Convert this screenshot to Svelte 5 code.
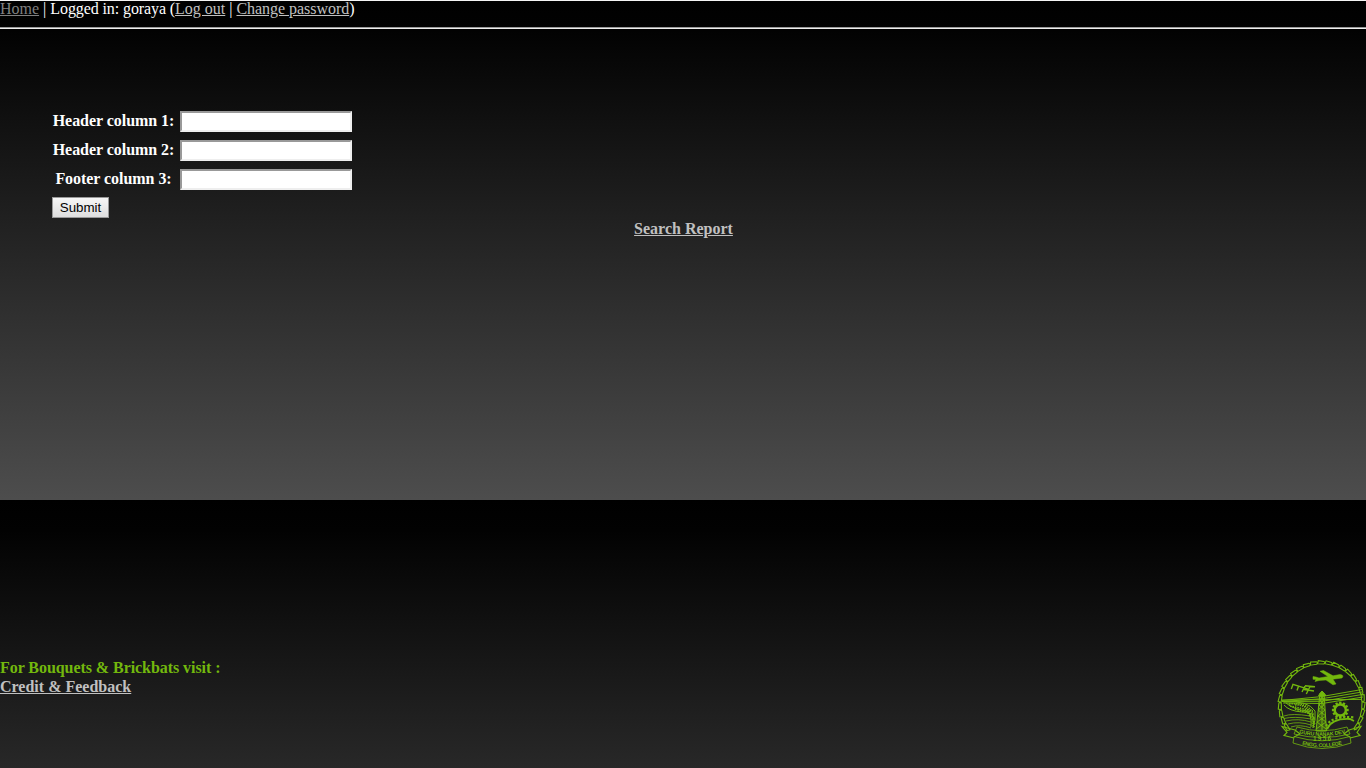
<script>
  const fields = ['Header column 1:', 'Header column 2:', 'Footer column 3:'];
  const count = 25;
  const start = 142;
  const step = (398 - start) / count;
  const at = (deg, r) => {
    const a = (deg * Math.PI) / 180;
    return `${(51.6 + r * Math.cos(a)).toFixed(2)},${(49.2 + r * Math.sin(a)).toFixed(2)}`;
  };
  const links = Array.from({ length: count }, (_, i) => {
    const a = start + i * step;
    return `M${at(a - 0.8, 40.6)} L${at(a + 0.8, 43.6)} L${at(a + step - 2, 42.8)} L${at(a + step, 41.6)} L${at(a + step - 2, 40.3)} Z`;
  });
  const teeth = Array.from({ length: 12 }, (_, i) => i * 30);
</script>

<div class="page">
  <nav>
    <a class="home" href="#home">Home</a> <span class="bar">|</span> <span class="user">Logged in: goraya (</span><a href="#logout">Log out</a> <span class="bar">|</span> <a class="password" href="#password">Change password</a>)
  </nav>
  <div class="rule"></div>
  <main>
    <form onsubmit={(e) => e.preventDefault()}>
      {#each fields as label, i}
        <label for={'f' + i}>{label}</label>
        <input id={'f' + i} type="text" />
      {/each}
      <button>Submit</button>
    </form>
    <a class="report" href="#search">Search Report</a>
  </main>
  <footer>
    <div class="credit">
      <span>For Bouquets &amp; Brickbats visit :</span>
      <a href="#credit">Credit &amp; Feedback</a>
    </div>
    <svg width="96" height="100" viewBox="0 0 96 100" fill="none" stroke="#73b80d" stroke-width="1">
      {#each links as d}
        <path {d} stroke-width="1.1" />
      {/each}
      <!-- aeroplane -->
      <path d="M43 21.5 L46 22 L49 23 L58 21.5 L50 16.3 L53.5 15.5 L63 20.8 L70 19.5 Q74.5 20 72 23 L63 24.2 L66 29 L63 29.8 L56 25 L49 25.5 L45 26.5 L46 24.5 L43 24.3 Z" fill="#73b80d" stroke-width=".5" />
      <!-- birds -->
      <path d="M21.3 34 L23 29.3 L38 34.2 M28.6 31 L27 35.5 M35 31 L32 37 M35 30.8 L45 31.8 M34 34.5 L44 36 M40 31.5 L36.3 39" stroke-width="1.4" />
      <!-- transmission lines -->
      <path d="M12 45.5 L52 41.5 L92 34.5 M12 46.5 L52 43.7 L92 37 M12 46.5 L52 46.3 L92 39.5 M13 48 L52 48.5 L93 42 M12 45 L92 44.4" stroke-width=".95" />
      <!-- pylon -->
      <path d="M50 38 H54 L56.5 76 H46 Z" fill="#73b80d" fill-opacity=".35" />
      <path d="M48.5 40.5 L52 36 L56 40.5 Z" fill="#73b80d" />
      <path d="M50 40 L54 45 L49 50 L55 55 L48 61 L56 67 L46 74 M54 40 L50 45 L54 50 L48 55 L56 61 L47 67 L56 74 M52 37 V75" stroke-width="1" />
      <!-- dam -->
      <path d="M14 47 Q38 45 45 56 Q46 66 43 72 M16 48 Q24 55 38 56 Q42 61 41 72 M14 50 Q19 56 32 57 H39" />
      <path d="M19 49 Q37 47 43 58 V73 M25 50 Q38 49 44 64 V73" stroke-width="1.5" stroke-dasharray="1.4 .9" />
      <path d="M20 51 L43 56 M25 54 L44 60 M36 56 L45 64 M39 60 L45 69" stroke-width="1.6" stroke-dasharray="1.5 1" />
      <!-- water -->
      <path d="M14 61 Q22 58 40 61 M14 63.5 Q24 61 41 64 M16 66 Q28 63 41 67 M18 69 Q29 66 41 70 M21 72 Q30 69 41 73" stroke-width=".8" />
      <!-- gears -->
      <circle cx="70.3" cy="55" r="5.6" stroke-width="2.5" />
      {#each teeth as t}
        <rect x="69.1" y="46.6" width="2.4" height="2.4" fill="#73b80d" stroke="none" transform={`rotate(${t} 70.3 55)`} />
      {/each}
      <path d="M57 74 Q62 63 80 64 L84 66" stroke-width="1.9" />
      <path d="M56 71 Q63 60 84 62.5" stroke-width="2.2" stroke-dasharray="2.2 1.8" />
      <!-- ribbon -->
      <path d="M27 72 Q52 79.5 77 72 L80 79 Q52 86 24 79 Z M24 81.5 Q52 90 80 81.5 L81 88 Q52 99 23 88 Z" stroke-width=".8" />
      <path d="M25 75 L12 71.5 L17 77.5 L14 80.5 L24 83 M79 75 L91 71.5 L87 77.5 L90 80.5 L80 83 M25 75 L30 79 L24 82 M79 75 L74 79 L80 82" stroke-width="1.15" />
      <path id="ribbon-upper" d="M29 78 Q52 84.2 76 77.8" stroke="none" />
      <path id="ribbon-lower" d="M29 88.7 Q52 95.8 76 88.3" stroke="none" />
      <g class="motto">
        <text><textPath href="#ribbon-upper" textLength="47">GURU NANAK DEV</textPath></text>
        <text class="year" x="43" y="85.5" textLength="18">1956</text>
        <text><textPath href="#ribbon-lower" startOffset="3" textLength="41">ENGG. COLLEGE</textPath></text>
      </g>
    </svg>
  </footer>
</div>

<style>
  :global(body) { margin: 0; overflow: hidden; background: #000; }
  .page {
    box-sizing: border-box;
    height: 768px;
    border-top: 1px solid #f4f4f4;
    background: linear-gradient(#000 0, #020202 30px, #4d4d4d 499px) 0 0 / 100% 500px repeat-y;
    background-origin: border-box;
    color: #fff;
    font: 16px/18px "Liberation Serif", serif;
  }
  a { color: #c0c0c0; }
  .home { color: #808080; }
  .bar { color: #fff; }
  .user { letter-spacing: -0.1px; }
  .password { letter-spacing: -0.04px; }
  nav { height: 26px; line-height: 16px; white-space: nowrap; }
  .rule { height: 1px; border-top: 1px solid #999; background: #eee; }
  main { height: 629px; display: flex; flex-direction: column; }
  form {
    padding: 82px 0 0 52px;
    display: grid;
    grid-template-columns: 123px 172px;
    grid-template-rows: 21px 21px 21px 21px;
    column-gap: 5px;
    row-gap: 8px;
  }
  label { text-align: center; font-weight: bold; line-height: 20px; letter-spacing: -0.05px; white-space: nowrap; }
  input {
    box-sizing: border-box;
    width: 172px;
    height: 21px;
    border: 2px solid;
    border-color: #999 #eee #eee #999;
    border-radius: 0;
    padding: 1px;
    background: #fff;
    outline: none;
  }
  button {
    box-sizing: border-box;
    width: 57px;
    height: 21px;
    margin-top: -1px;
    padding: 0;
    border: 1px solid #999;
    border-radius: 0;
    background: linear-gradient(#f6f6f6, #dedede);
    color: #000;
    font: 13.333px "Liberation Sans", sans-serif;
  }
  .report { align-self: center; margin: 1px 0 0 1px; font-weight: bold; }
  footer { display: flex; justify-content: space-between; height: 110px; overflow: hidden; }
  .credit { display: flex; flex-direction: column; align-items: flex-start; font-weight: bold; line-height: 19px; }
  .credit span { color: #73b80d; letter-spacing: -0.06px; }
  svg { display: block; margin-top: -3px; }
  .motto { fill: #73b80d; stroke: none; font: bold 5.4px "Liberation Sans", sans-serif; }
  .year { font-size: 6.4px; }
</style>
